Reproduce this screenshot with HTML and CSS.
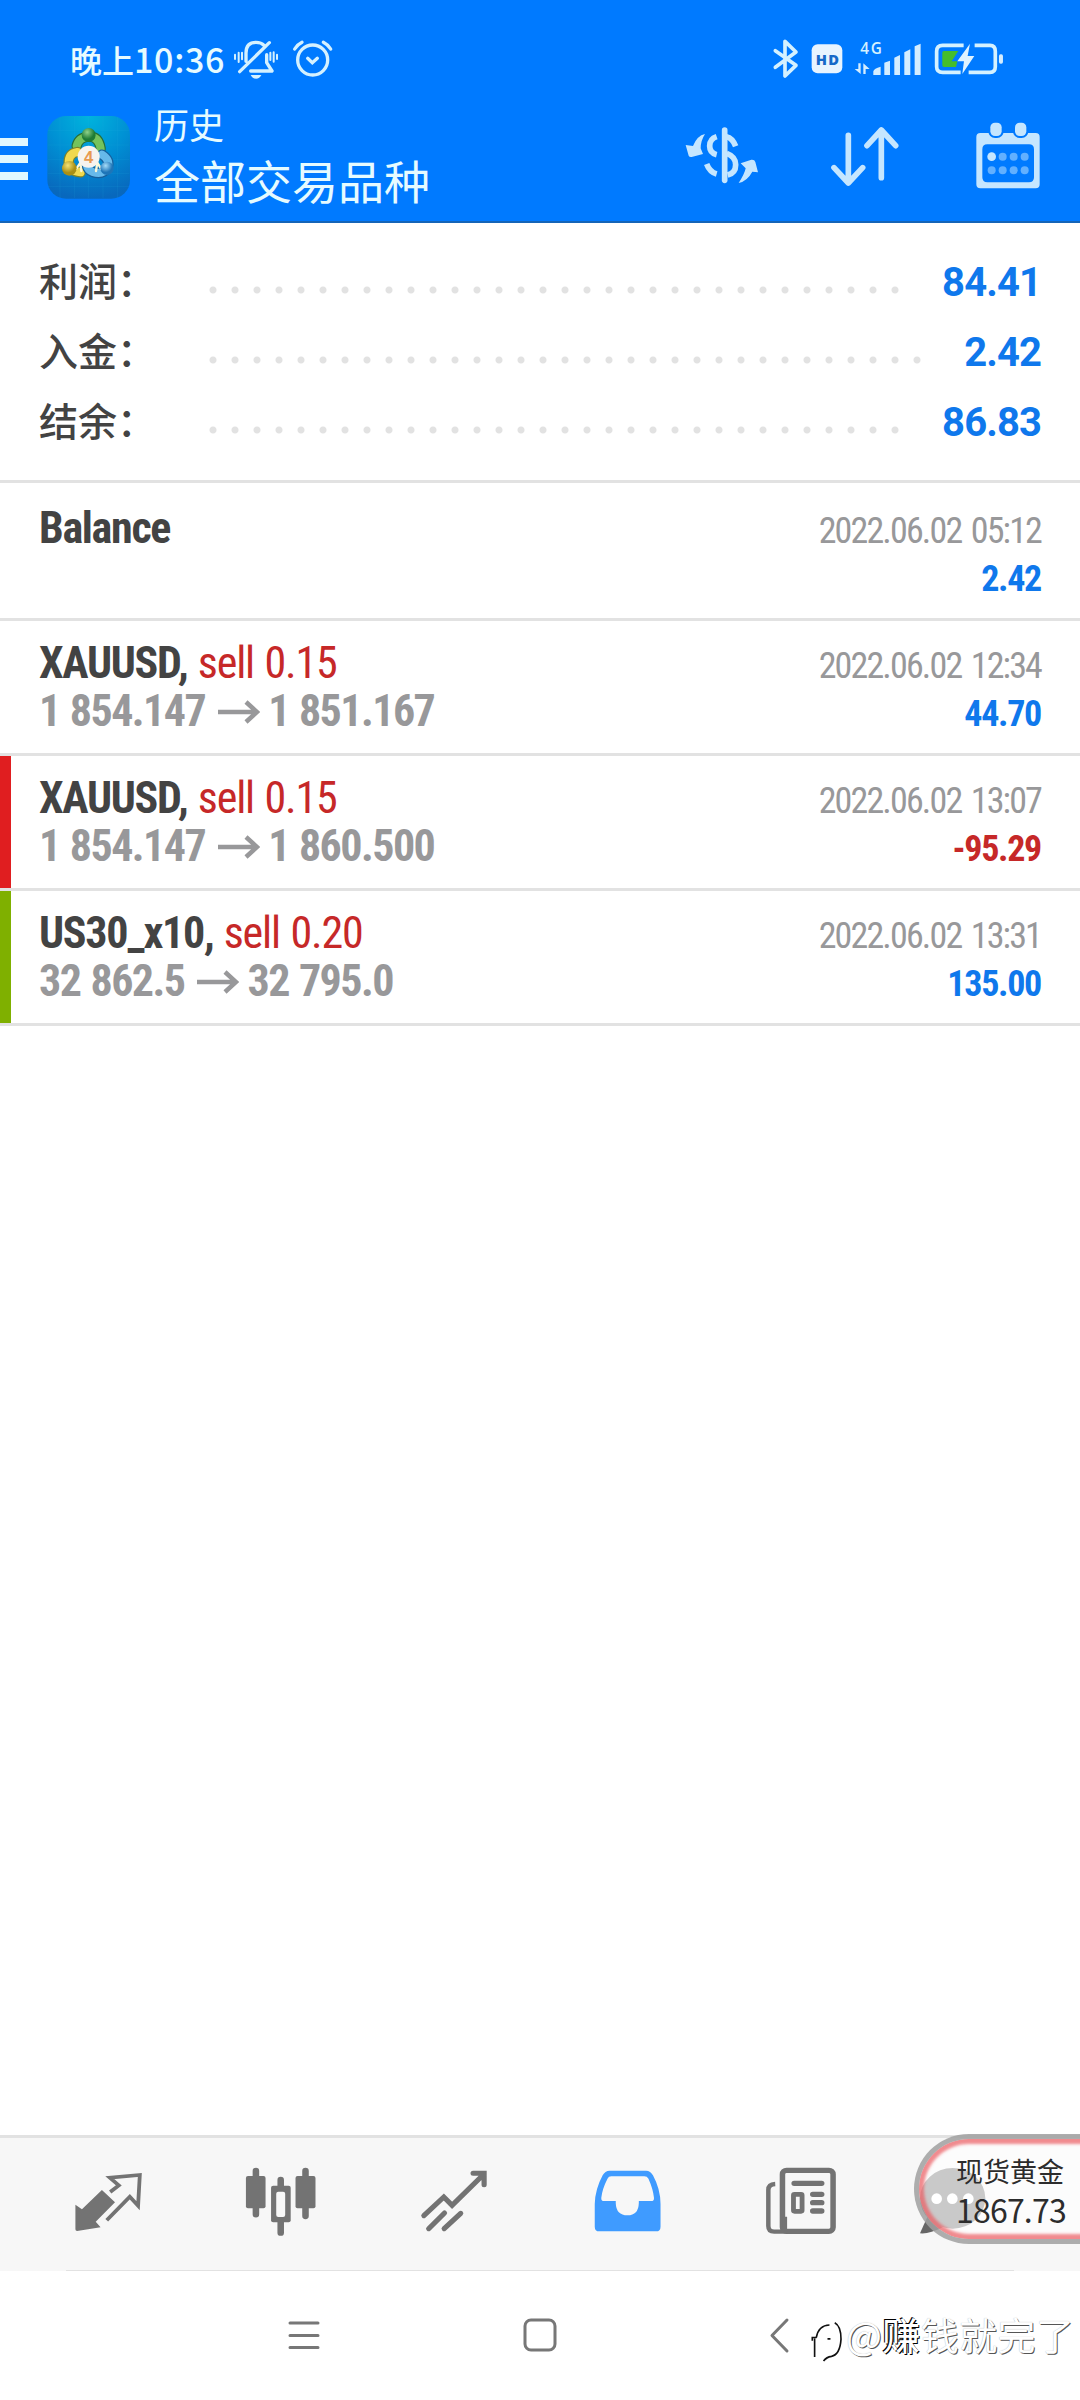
FILE: index.html
```html
<!DOCTYPE html>
<html lang="zh-CN">
<head>
<meta charset="utf-8">
<title>历史</title>
<link rel="stylesheet" href="styles.css">
</head>
<body>
<div class="screen">
  <header class="header">
    <div class="status">
      <span class="clock">晚上<span class="clock-digits">10:36</span></span>
      <svg class="status-left" viewBox="696 54 308 126" fill="none" stroke="#d4f1ff" stroke-width="10" stroke-linecap="round">
        <path d="M738 124V99Q738 67 768 67Q784 67 792 76M808 68L719 155M800 104V128L816 153H752" stroke-linejoin="round"/>
        <path d="M705 104V117M716 98V126M726 98V118M811 98V120M821 97V125M831 104V117" stroke-width="6"/>
        <path d="M752 165H784Q779 176 768 176T752 165Z" fill="#d4f1ff" stroke="none"/>
        <circle cx="938" cy="120" r="45"/>
        <path d="M923 115L937 128L952 115M884 87Q892 74 906 67M970 67Q984 74 992 87"/>
      </svg>
      <svg class="status-right" viewBox="336 54 700 126" fill="none">
        <path d="M346 92L408 136L375 168V64L408 96L346 142" stroke="#d4f1ff" stroke-width="11" stroke-linejoin="round" stroke-linecap="round"/>
        <rect x="455" y="73" width="92" height="87" rx="18" fill="#e8f4ff"/>
        <text class="hd" x="467" y="134" textLength="70">HD</text>
        <text class="net" x="601" y="101" textLength="65">4G</text>
        <g fill="#d4edff">
          <path d="M595 130H602V162L584 147H595ZM610 162V130L629 147H617V162Z"/>
          <path d="M640 165V154Q642 145 662 140V165ZM673 165V128L690 122V165ZM703 165V113L720 105V165ZM733 165V97L751 88V165ZM764 165V79L782 71V165Z"/>
          <rect x="1017" y="103" width="12" height="28" rx="5"/>
        </g>
        <path d="M911 76H848Q830 76 830 94V140Q830 157 848 157H902M944 76H990Q1006 76 1006 94V140Q1006 157 990 157H926" stroke="#d4f1ff" stroke-width="11"/>
        <path d="M852 93H895L875 124H892L888 141H852Q847 141 847 136V98Q847 93 852 93Z" fill="#45bd2c"/>
        <path d="M930 71L892 124H912L907 162L943 108H923Z" fill="#e0f3ff"/>
      </svg>
    </div>
    <div class="toolbar">
      <div class="burger"><i></i><i></i><i></i></div>
      <svg class="logo" viewBox="0 0 288 288">
        <defs>
          <radialGradient id="sky" cx=".5" cy="0" r="1"><stop offset="0" stop-color="#00b4dd"/><stop offset=".5" stop-color="#0090d4"/><stop offset="1" stop-color="#0868bd"/></radialGradient>
          <radialGradient id="gr" cx=".4" cy=".3"><stop offset="0" stop-color="#8fd28a"/><stop offset="1" stop-color="#1f7c35"/></radialGradient>
          <radialGradient id="ye" cx=".4" cy=".3"><stop offset="0" stop-color="#f2e277"/><stop offset="1" stop-color="#a98f14"/></radialGradient>
          <radialGradient id="bl" cx=".4" cy=".3"><stop offset="0" stop-color="#a6dcf8"/><stop offset="1" stop-color="#1d75b8"/></radialGradient>
        </defs>
        <rect x="22" y="18" width="248" height="248" rx="56" fill="url(#sky)"/>
        <path d="M60 20V264M103 20V264M146 20V264M189 20V264M232 20V264M24 62H268M24 105H268M24 148H268M24 191H268M24 230H268" stroke="#24b5e2" stroke-opacity=".2" stroke-width="2"/>
        <g fill="none" stroke-linecap="round">
          <path d="M110 108Q116 82 146 80T182 116" stroke="#286e35" stroke-width="31"/>
          <path d="M110 108Q116 82 146 80T182 116" stroke="#74c35c" stroke-width="24"/>
          <path d="M112 126Q84 130 86 163Q90 184 122 187" stroke="#7d8326" stroke-width="31"/>
          <path d="M112 126Q84 130 86 163Q90 184 122 187" stroke="#f0d94f" stroke-width="24"/>
          <path d="M186 134Q211 150 203 172Q189 196 158 186Q143 179 141 168" stroke="#165f9b" stroke-width="31"/>
          <path d="M186 134Q211 150 203 172Q189 196 158 186Q143 179 141 168" stroke="#66b9ea" stroke-width="24"/>
          <path d="M109 176L121 158L124 183M183 176L172 158L168 183" stroke="#fbf7d8" stroke-width="7"/>
        </g>
        <circle cx="146" cy="75" r="21" fill="url(#gr)"/>
        <circle cx="88" cy="175" r="22" fill="url(#ye)"/>
        <circle cx="201" cy="175" r="20" fill="url(#bl)"/>
        <circle cx="146" cy="140" r="33" fill="#f7f3ee"/>
        <text class="logo-4" x="146" y="158" text-anchor="middle">4</text>
      </svg>
      <div class="titles">
        <div class="title">历史</div>
        <div class="subtitle">全部交易品种</div>
      </div>
      <div class="actions">
        <svg viewBox="66 300 240 216" fill="none" stroke="#c5e6ff" stroke-width="17">
          <path d="M194 330V481" stroke-linecap="round"/>
          <path d="M170 350Q149 357 149 378T170 404M140 432Q149 456 170 462"/>
          <path d="M199 350Q218 354 227 379M200 400Q227 410 227 434Q227 459 203 465"/>
          <path d="M135 342Q111 347 99 378L77 375L86 407Q88 412 95 411L129 402L122 385Q122 362 135 342ZM236 489Q254 461 257 445L242 430L274 419Q284 418 286 426L294 457L277 455Q262 483 236 489Z" fill="#c5e6ff" stroke="none"/>
        </svg>
        <svg viewBox="496 300 240 216" fill="none" stroke="#c5e6ff" stroke-width="17" stroke-linecap="round" stroke-linejoin="round">
          <path d="M566 346V488M523 443L566 489L609 443M665 473V330M622 377L665 330L708 377"/>
        </svg>
        <svg viewBox="925 300 240 216">
          <path fill-rule="evenodd" d="M962 339H1128Q1140 339 1140 351V493Q1140 505 1128 505H962Q950 505 950 493V351Q950 339 962 339ZM983 373Q968 373 968 388V472Q968 487 983 487H1108Q1123 487 1123 472V388Q1123 373 1108 373Z" fill="#c5e6ff"/>
          <rect x="986" y="303" width="46" height="51" rx="20" fill="#007aff"/><rect x="1060" y="303" width="46" height="51" rx="20" fill="#007aff"/>
          <rect x="992" y="308" width="34" height="40" rx="14" fill="#c5e6ff"/><rect x="1066" y="308" width="34" height="40" rx="14" fill="#c5e6ff"/>
          <circle cx="996" cy="410" r="13" fill="#c5e6ff"/>
          <g fill="#62b0ff"><circle cx="1029" cy="410" r="12"/><circle cx="1062" cy="410" r="12"/><circle cx="1095" cy="410" r="12"/><circle cx="996" cy="451" r="12"/><circle cx="1029" cy="451" r="12"/><circle cx="1062" cy="451" r="12"/><circle cx="1095" cy="451" r="12"/></g>
        </svg>
      </div>
    </div>
  </header>

  <main class="content">
    <section class="summary">
      <div class="sum-row"><span class="sum-label">利润：</span><span class="dots"></span><span class="sum-value">84.41</span></div>
      <div class="sum-row"><span class="sum-label">入金：</span><span class="dots dots-long"></span><span class="sum-value">2.42</span></div>
      <div class="sum-row"><span class="sum-label">结余：</span><span class="dots"></span><span class="sum-value">86.83</span></div>
    </section>
    <section class="deals">
      <div class="deal deal-first">
        <div class="deal-main"><div class="symbol">Balance</div></div>
        <div class="deal-side"><div class="date">2022.06.02 05:12</div><div class="amount">2.42</div></div>
      </div>
      <div class="deal">
        <div class="deal-main">
          <div class="symbol">XAUUSD, <span class="side">sell 0.15</span></div>
          <div class="prices">1 854.147<svg class="arrow" viewBox="0 0 42 24"><path d="M0 12H39M28 2L39 12L28 22"/></svg>1 851.167</div>
        </div>
        <div class="deal-side"><div class="date">2022.06.02 12:34</div><div class="amount">44.70</div></div>
      </div>
      <div class="deal deal-sl">
        <div class="deal-main">
          <div class="symbol">XAUUSD, <span class="side">sell 0.15</span></div>
          <div class="prices">1 854.147<svg class="arrow" viewBox="0 0 42 24"><path d="M0 12H39M28 2L39 12L28 22"/></svg>1 860.500</div>
        </div>
        <div class="deal-side"><div class="date">2022.06.02 13:07</div><div class="amount loss">-95.29</div></div>
      </div>
      <div class="deal deal-tp">
        <div class="deal-main">
          <div class="symbol">US30_x10, <span class="side">sell 0.20</span></div>
          <div class="prices">32 862.5<svg class="arrow" viewBox="0 0 42 24"><path d="M0 12H39M28 2L39 12L28 22"/></svg>32 795.0</div>
        </div>
        <div class="deal-side"><div class="date">2022.06.02 13:31</div><div class="amount">135.00</div></div>
      </div>
    </section>
  </main>

  <nav class="tabs">
    <svg viewBox="197.5 120 232.3 240" preserveAspectRatio="none" fill="#737373">
      <path d="M296 210L334 247L278 305L292 322L224 333Q219 333 219 328V254L238 268Z"/>
      <path d="M320 216L345 196L319 173L406 165L401 257L377 230L310 301" fill="none" stroke="#737373" stroke-width="11"/>
    </svg>
    <svg viewBox="700.7 120 232.3 240" preserveAspectRatio="none" fill="#737373">
      <path d="M744 153V283M888 153V288M816 180V338" stroke="#737373" stroke-width="19" stroke-linecap="round"/>
      <rect x="715" y="168" width="57" height="97" rx="6"/><rect x="859" y="168" width="58" height="97" rx="6"/>
      <rect x="788" y="197" width="57" height="110" rx="6"/><rect x="803" y="215" width="26" height="76" rx="6" fill="#f7f7f7"/>
    </svg>
    <svg viewBox="1204.3 120 232.3 240" preserveAspectRatio="none" fill="none" stroke="#737373" stroke-width="15" stroke-linecap="round">
      <path d="M1230 287L1288 231L1312 256L1404 163M1373 160H1405V194M1244 326L1290 279M1289 326L1337 280"/>
    </svg>
    <svg viewBox="139.4 120 232.3 240" preserveAspectRatio="none">
      <path fill-rule="evenodd" fill="#3f9bff" d="M202 152H308Q321 152 328 166Q350 208 350 252V320Q350 334 337 334H172Q159 334 159 320V252Q160 208 182 166Q189 152 202 152ZM207 169Q199 169 196 176Q181 206 178 233Q177 243 186 243H220V249Q221 286 254 286Q286 286 287 249V243H323Q332 243 331 233Q328 206 315 176Q311 169 303 169Z"/>
    </svg>
    <svg viewBox="642.7 120 232.3 240" preserveAspectRatio="none" fill="none" stroke="#737373">
      <rect x="705" y="151" width="147" height="183" rx="12" stroke-width="16"/>
      <path d="M684 192Q664 193 664 210V318Q664 335 681 335H712V290" stroke-width="13"/>
      <path d="M739 190H819M793 223H819M793 248H819M793 273H819" stroke-width="16" stroke-linecap="round"/>
      <rect x="737" y="223" width="25" height="51" rx="3" stroke-width="14"/>
    </svg>
    <svg class="chat" viewBox="464 120 240 240" fill="#666">
      <ellipse cx="520" cy="235" rx="98" ry="91"/><path d="M445 289L422 340Q450 343 490 322Z"/>
      <g fill="#fff"><circle cx="472" cy="236" r="16"/><circle cx="519" cy="236" r="16"/><circle cx="567" cy="236" r="16"/></g>
    </svg>
  </nav>

  <footer class="sysnav">
    <svg viewBox="0 0 48 48"><path d="M10 11H38M10 23.500H38M10 35.500H38"/></svg>
    <svg viewBox="0 0 48 48"><rect x="9" y="8" width="30" height="30" rx="6"/></svg>
    <svg viewBox="0 0 48 48"><path d="M35 8L20 23.500L35 39"/></svg>
  </footer>

  <div class="ticker"><div class="ticker-name">现货黄金</div><div class="ticker-price">1867.73</div></div>
  <div class="mark">
    <svg class="mark-logo" viewBox="90 590 100 145" fill="none" stroke="#111" stroke-width="5"><path d="M104 714V658M97 665V655H110M109 655Q116 618 149 617M143 659H152M165 610Q184 620 184 660Q181 707 155 712Q140 714 131 726"/></svg>
    <span>@<b>赚</b>钱就完了</span>
  </div>
</div>
</body>
</html>
```
FILE: styles.css
```css
* { box-sizing: border-box; }
body { margin: 0; background: #fff; }
.screen {
  position: relative;
  width: 1080px;
  height: 2400px;
  overflow: hidden;
  display: flex;
  flex-direction: column;
  background: #fff;
  color: #434343;
  font-family: Roboto, "Noto Sans CJK SC", sans-serif;
}
svg { display: block; flex: none; }

/* header */
.header {
  height: 223px;
  background: #007aff;
  border-bottom: 2px solid #1565b8;
  font-family: "Noto Sans CJK SC", sans-serif;
  color: #e6fbff;
}
.status { display: flex; height: 96px; padding: 38px 75px 0 70px; }
.clock {
  width: 162px;
  font-size: 32px;
  line-height: 42px;
  font-weight: 500;
  white-space: nowrap;
}
.clock-digits { font-size: 34px; letter-spacing: .7px; }
.status-left { width: 102.700px; height: 42px; }
.status-right { width: 233.300px; height: 42px; margin-left: auto; }
.hd { font: 800 44px "Open Sans", sans-serif; fill: #1769c8; }
.net { font: 600 46px "Open Sans", sans-serif; fill: #d4f1ff; }
.toolbar { display: flex; height: 125px; padding-right: 32px; }
.burger { width: 28px; padding-top: 42px; display: flex; flex-direction: column; gap: 9px; }
.burger i { height: 8px; background: #e0f8ff; }
.logo { width: 96px; height: 96px; margin: 14px 0 0 12px; }
.logo-4 { font: 700 50px "Liberation Sans", sans-serif; fill: #e89a50; }
.titles { margin-left: 18px; padding-top: 8px; }
.title { font-size: 35px; line-height: 40px; font-weight: 400; }
.subtitle { font-size: 46px; line-height: 60px; margin-top: 5px; font-weight: 400; white-space: nowrap; }
.actions { display: flex; gap: 63px; margin-left: auto; padding-top: 24px; }
.actions svg { width: 80px; height: 72px; }

/* summary */
.content { flex: 1; }
.summary { height: 260px; padding: 24px 39px 0; border-bottom: 3px solid #e2e2e2; }
.sum-row { display: flex; height: 70px; align-items: center; }
.sum-label {
  width: 163px;
  padding-bottom: 6px;
  font: 500 39px/64px "Noto Sans CJK SC", sans-serif;
  white-space: nowrap;
}
.dots {
  width: 704px;
  height: 10px;
  margin-top: 15px;
  background: radial-gradient(circle, #e2e2e2 3px, transparent 4px) 0 0 / 22px 10px;
}
.dots-long { width: 726px; }
.sum-value {
  margin-left: auto;
  padding-top: 2px;
  font-size: 40px;
  font-weight: 700;
  letter-spacing: -.9px;
  line-height: 68px;
  color: #0f78ec;
}

/* deals */
.deal {
  display: flex;
  justify-content: space-between;
  align-items: baseline;
  height: 135px;
  padding: 18px 39px 0 39px;
  border-bottom: 3px solid #e2e2e2;
  font-family: "Roboto Condensed", Roboto, sans-serif;
  font-stretch: 75%;
  line-height: 48px;
  white-space: nowrap;
}
.deal-first { height: 138px; padding-top: 21px; }
.deal-sl { box-shadow: inset 11px 0 #e01e20; }
.deal-tp { box-shadow: inset 11px 0 #7fb000; }
.symbol, .prices { font-size: 44px; font-weight: 700; height: 48px; letter-spacing: -1.300px; }
.side { font-weight: 400; color: #c62828; letter-spacing: -1.150px; }
.symbol { word-spacing: 1.500px; }
.prices { display: flex; align-items: center; color: #98989a; letter-spacing: -1.550px; word-spacing: 1.500px; }
.arrow { width: 42px; height: 24px; margin: 1px 8px 0 13px; fill: none; stroke: #98989a; stroke-width: 4.500; }
.deal-side { text-align: right; font-size: 36px; }
.date { color: #98989a; letter-spacing: -1.850px; word-spacing: 3px; }
.amount { font-weight: 700; color: #0f78ec; letter-spacing: -1.300px; }
.amount.loss { color: #c62828; }

/* tab bar */
.tabs {
  display: flex;
  gap: 93.300px;
  height: 136px;
  padding: 22px 0 0 68px;
  background: linear-gradient(#e2e2e2, #e2e2e2) 66px 100% / 948px 1px no-repeat #f7f7f7;
  border-top: 3px solid #e2e2e2;
}
.tabs svg { width: 80px; height: 80px; }
.tabs .chat { overflow: visible; }

/* system navigation */
.sysnav { height: 129px; padding: 41px 280px 0; display: flex; justify-content: space-between; }
.sysnav svg { width: 48px; height: 48px; fill: none; stroke: #777; stroke-width: 3; stroke-linecap: round; stroke-linejoin: round; }

/* floating quote */
.ticker {
  position: absolute;
  left: 914px;
  top: 2134px;
  width: 200px;
  height: 110px;
  padding: 15px 0 0 37px;
  border: 5px solid rgba(120, 120, 120, .6);
  border-right: 0;
  border-radius: 55px 0 0 55px;
  background: rgba(255, 255, 255, .65);
  box-shadow: inset 0 0 3px 5px rgba(235, 90, 95, .7);
  color: #2c2c2c;
  font-family: "Noto Sans CJK SC", sans-serif;
}
.ticker-name { font-size: 27px; line-height: 34px; }
.ticker-price { font-size: 32px; line-height: 42px; letter-spacing: -.8px; }

/* watermark */
.mark {
  position: absolute;
  left: 810px;
  top: 2309px;
  display: flex;
  align-items: flex-start;
  gap: 3px;
  color: #fff;
  font: 400 38px/50px "Noto Sans CJK SC", sans-serif;
  letter-spacing: .4px;
  text-shadow: 1px 1px 0 #555, 0 0 1px #aaa;
  white-space: nowrap;
}
.mark b { font-weight: 500; text-shadow: -1px -1px 0 #000, 1px 1px 0 #000; }
.mark-logo { width: 33px; height: 48px; margin-top: 7px; }
```
